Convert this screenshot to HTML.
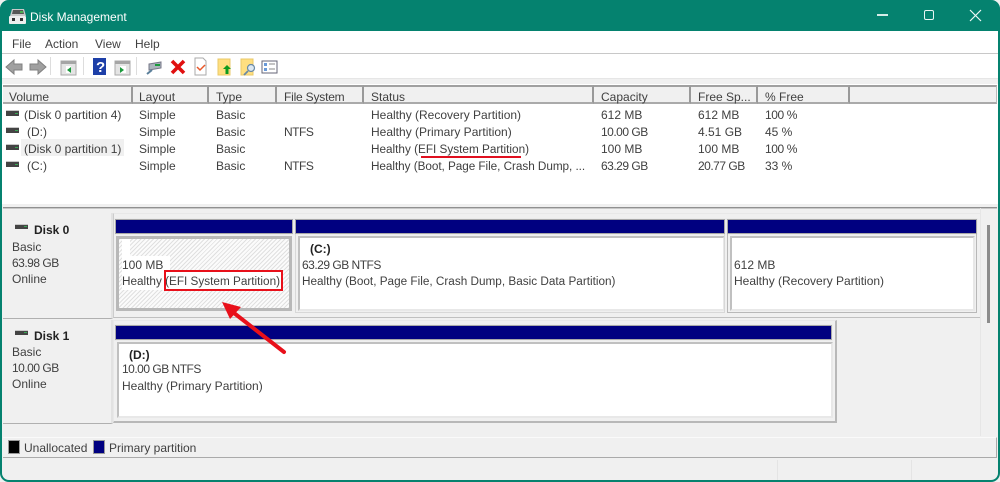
<!DOCTYPE html>
<html><head><meta charset="utf-8"><style>
html,body{margin:0;padding:0;width:1000px;height:482px;overflow:hidden;background:#fff}
#w{position:relative;width:1000px;height:482px;overflow:hidden;background:#f0f0f0;font-family:"Liberation Sans",sans-serif;font-size:12px;color:#404040}
#w div{position:absolute;box-sizing:border-box}
.t{position:absolute;white-space:nowrap;line-height:14px;height:14px}
.b{font-weight:bold;color:#222}
.n{letter-spacing:-.5px}
.s{font-size:11.75px;margin-top:1px}
.h{background:#f0f0f0;top:85px;height:19px;border-top:2px solid #a0a0a0;border-right:2px solid #999;border-bottom:2px solid #aaa}
.nv{background:#000080;border:1px solid #a8a8a8;outline:1px solid #ececec}
.pt{background:#fff;border-top:2px solid #c0c0c0;border-left:2px solid #c0c0c0;border-right:2px solid #e8e8e8;border-bottom:2px solid #e8e8e8}
</style></head><body><div id="w">
<div style="left:0;top:0;width:1000px;height:482px;border:2px solid #05826f;border-top:0;border-radius:9px;pointer-events:none;z-index:9"></div>
<div style="left:0;top:0;width:1000px;height:31px;background:#05826f;border-radius:9px 9px 0 0"></div>
<svg style="position:absolute;left:9px;top:8px" width="18" height="17" viewBox="0 0 18 17"><path d="M3 1h12l2 7H1z" fill="#c9c9c9"/><path d="M4 2h10l1 4H3z" fill="#555"/><rect x="0" y="8" width="17" height="8" rx="1" fill="#eee"/><rect x="3" y="10" width="3" height="3" fill="#333"/><rect x="11" y="10" width="3" height="3" fill="#333"/><rect x="11" y="3" width="3" height="2" fill="#4caf50"/></svg>
<span class="t" style="left:30px;top:10px;color:#fff;font-size:12px">Disk Management</span>
<div style="left:877px;top:14px;width:11px;height:2px;background:#d5ece8"></div>
<div style="left:924px;top:10px;width:10px;height:10px;border:1.5px solid #e8f5f3;border-radius:2px"></div>
<svg style="position:absolute;left:969px;top:9px" width="13" height="13"><path d="M1 1L12 12M12 1L1 12" stroke="#eef8f6" stroke-width="1.2"/></svg>

<div style="left:2px;top:31px;width:996px;height:22px;background:#fff"></div>
<span class="t" style="left:12px;top:37px">File</span>
<span class="t" style="left:45px;top:37px">Action</span>
<span class="t" style="left:95px;top:37px">View</span>
<span class="t" style="left:135px;top:37px">Help</span>
<div style="left:2px;top:53px;width:996px;height:1px;background:#c8c8c8"></div>
<div style="left:2px;top:54px;width:996px;height:24px;background:#fff"></div>
<div style="left:2px;top:78px;width:996px;height:1px;background:#e6e6e6"></div>
<svg style="position:absolute;left:0;top:54px" width="300" height="24" viewBox="0 0 300 24">
<path d="M6 13l8-7v4h8v6h-8v4z" fill="#a0a0a0" stroke="#808080"/>
<path d="M46 13l-8-7v4h-8v6h8v4z" fill="#a0a0a0" stroke="#808080"/>
<rect x="50" y="3" width="1" height="18" fill="#ddd"/>
<rect x="61" y="7" width="15" height="14" fill="#e4e4e4" stroke="#aaa"/><rect x="61" y="7" width="15" height="3" fill="#a5a5a5"/><rect x="66" y="12" width="5" height="7" fill="#fff"/><path d="M71 13l-4 3 4 3z" fill="#1a9a3c"/>
<rect x="83" y="3" width="1" height="18" fill="#ddd"/>
<rect x="93" y="4" width="13" height="17" fill="#1d3fa8"/><text x="96" y="18" font-family="Liberation Sans" font-weight="bold" font-size="15" fill="#fff">?</text>
<rect x="115" y="7" width="15" height="14" fill="#e4e4e4" stroke="#aaa"/><rect x="115" y="7" width="15" height="3" fill="#a5a5a5"/><rect x="120" y="12" width="6" height="7" fill="#fff"/><path d="M120 13l4 3-4 3z" fill="#1a9a3c"/>
<rect x="136" y="3" width="1" height="18" fill="#ddd"/>
<path d="M149 10l12-2v6l-12 2z" fill="#aab4bc" stroke="#778"/><rect x="155" y="10" width="5" height="2" fill="#1a9a3c"/><path d="M147 20l5-4" stroke="#5a7f9a" stroke-width="2"/>
<path d="M172 7l12 12M184 7l-12 12" stroke="#e01010" stroke-width="3.6"/>
<path d="M195 4h8l3 3v14h-11z" fill="#fff" stroke="#aaa"/><path d="M197 13l3 3 5-5" stroke="#e8582a" stroke-width="1.5" fill="none"/>
<rect x="218" y="5" width="12" height="16" fill="#ffdf80" stroke="#e8c868"/><path d="M227 11l-4 4h2.500v5h3v-5h2.500z" fill="#0e9a1e"/>
<rect x="241" y="5" width="12" height="16" fill="#ffdf80" stroke="#e8c868"/><circle cx="251" cy="14" r="3.500" fill="#dce8f2" stroke="#6a8aa5" stroke-width="1.200"/><path d="M248 17l-4 4" stroke="#6a8aa5" stroke-width="1.800"/>
<rect x="262" y="7" width="15" height="12" fill="#fff" stroke="#667"/><rect x="264" y="9" width="3" height="3" fill="#6a9ad8"/><rect x="264" y="14" width="3" height="3" fill="#6a9ad8"/><path d="M269 10h6M269 15h6" stroke="#888"/>
</svg>

<div style="left:2px;top:84px;width:996px;height:120px;background:#fff"></div>
<div class="h" style="left:3px;width:130px"></div>
<div class="h" style="left:133px;width:76px"></div>
<div class="h" style="left:209px;width:68px"></div>
<div class="h" style="left:277px;width:87px"></div>
<div class="h" style="left:364px;width:230px"></div>
<div class="h" style="left:594px;width:97px"></div>
<div class="h" style="left:691px;width:67px"></div>
<div class="h" style="left:758px;width:92px"></div>
<div class="h" style="left:850px;width:147px;border-right:1px solid #bbb"></div>
<span class="t" style="left:9px;top:90px">Volume</span><span class="t" style="left:139px;top:90px">Layout</span><span class="t" style="left:216px;top:90px">Type</span><span class="t" style="left:284px;top:90px;letter-spacing:-.2px">File System</span><span class="t" style="left:371px;top:90px">Status</span><span class="t" style="left:601px;top:90px">Capacity</span><span class="t" style="left:698px;top:90px">Free Sp...</span><span class="t" style="left:765px;top:90px">% Free</span>

<div style="left:21px;top:139px;width:103px;height:17px;background:#f0f0f0"></div>
<svg style="position:absolute;left:6px;top:110px" width="14" height="62"><g fill="#444"><rect y="1" width="13" height="5"/><rect y="18" width="13" height="5"/><rect y="35" width="13" height="5"/><rect y="52" width="13" height="5"/></g><g fill="#c8c8c8"><rect y="0" width="13" height="1"/><rect y="17" width="13" height="1"/><rect y="34" width="13" height="1"/><rect y="51" width="13" height="1"/></g><g fill="#3aa655"><rect x="9" y="3" width="3" height="1"/><rect x="9" y="20" width="3" height="1"/><rect x="9" y="37" width="3" height="1"/><rect x="9" y="54" width="3" height="1"/></g></svg>
<span class="t" style="left:24px;top:108px">(Disk 0 partition 4)</span><span class="t" style="left:139px;top:108px">Simple</span><span class="t" style="left:216px;top:108px">Basic</span><span class="t" style="left:371px;top:108px">Healthy (Recovery Partition)</span><span class="t" style="left:601px;top:108px">612 MB</span><span class="t" style="left:698px;top:108px">612 MB</span><span class="t" style="left:765px;top:108px;letter-spacing:-.4px">100 %</span>
<span class="t" style="left:27px;top:125px">(D:)</span><span class="t" style="left:139px;top:125px">Simple</span><span class="t" style="left:216px;top:125px">Basic</span><span class="t n" style="left:284px;top:125px">NTFS</span><span class="t" style="left:371px;top:125px">Healthy (Primary Partition)</span><span class="t n" style="left:601px;top:125px">10.00 GB</span><span class="t" style="left:698px;top:125px">4.51 GB</span><span class="t" style="left:765px;top:125px">45 %</span>
<span class="t" style="left:24px;top:142px">(Disk 0 partition 1)</span><span class="t" style="left:139px;top:142px">Simple</span><span class="t" style="left:216px;top:142px">Basic</span><span class="t s" style="left:371px;top:142px">Healthy (EFI System Partition)</span><span class="t" style="left:601px;top:142px">100 MB</span><span class="t" style="left:698px;top:142px">100 MB</span><span class="t" style="left:765px;top:142px;letter-spacing:-.4px">100 %</span>
<span class="t" style="left:27px;top:159px">(C:)</span><span class="t" style="left:139px;top:159px">Simple</span><span class="t" style="left:216px;top:159px">Basic</span><span class="t n" style="left:284px;top:159px">NTFS</span><span class="t s" style="left:371px;top:159px;letter-spacing:-.05px">Healthy (Boot, Page File, Crash Dump, ...</span><span class="t n" style="left:601px;top:159px">63.29 GB</span><span class="t n" style="left:698px;top:159px">20.77 GB</span><span class="t" style="left:765px;top:159px">33 %</span>
<div style="left:421px;top:156px;width:100px;height:2px;background:#e01020"></div>

<div style="left:3px;top:207px;width:994px;height:1px;background:#909090"></div>
<div style="left:3px;top:208px;width:994px;height:1px;background:#c8c8c8"></div>

<div style="left:3px;top:213px;width:110px;height:106px;background:#f0f0f0;border-right:2px solid #e2e2e2;border-bottom:1px solid #b0b0b0"></div>
<div style="left:3px;top:320px;width:110px;height:104px;background:#f0f0f0;border-right:2px solid #e2e2e2;border-bottom:1px solid #b0b0b0"></div>
<svg style="position:absolute;left:15px;top:224px" width="14" height="120"><rect y="1" width="13" height="4" fill="#444"/><rect width="13" height="1" fill="#c8c8c8"/><rect x="9" y="2" width="3" height="1" fill="#3aa655"/><rect y="107" width="13" height="4" fill="#444"/><rect y="106" width="13" height="1" fill="#c8c8c8"/><rect x="9" y="108" width="3" height="1" fill="#3aa655"/></svg>
<span class="t b" style="left:34px;top:223px">Disk 0</span>
<span class="t" style="left:12px;top:240px">Basic</span><span class="t n" style="left:12px;top:256px">63.98 GB</span><span class="t" style="left:12px;top:272px">Online</span>
<span class="t b" style="left:34px;top:329px">Disk 1</span>
<span class="t" style="left:12px;top:345px">Basic</span><span class="t n" style="left:12px;top:361px">10.00 GB</span><span class="t" style="left:12px;top:377px">Online</span>

<div style="left:113px;top:213px;width:867px;height:105px;border-top:1px solid #e8e8e8;border-left:1px solid #ccc;border-bottom:1px solid #c0c0c0"></div>
<div class="nv" style="left:115px;top:219px;width:178px;height:15px"></div>
<div class="nv" style="left:295px;top:219px;width:430px;height:15px"></div>
<div class="nv" style="left:727px;top:219px;width:250px;height:15px"></div>

<div style="left:116px;top:236px;width:176px;height:75px;border:3px solid #b8b8b8;background:repeating-linear-gradient(135deg,#e0e0e0 0,#e0e0e0 1px,#fbfbfb 1px,#fbfbfb 3px)"></div>
<div style="left:122px;top:239px;width:8px;height:17px;background:#fff"></div>
<div style="left:122px;top:256px;width:48px;height:16px;background:#fff"></div>
<div style="left:122px;top:272px;width:160px;height:18px;background:#fff"></div>
<div class="pt" style="left:298px;top:236px;width:427px;height:75px"></div>
<div class="pt" style="left:730px;top:236px;width:245px;height:75px"></div>
<div style="left:727px;top:234px;width:250px;height:79px;border:1px solid #b8b8b8;border-top:0"></div>
<div style="left:295px;top:234px;width:430px;height:79px;border:1px solid #d8d8d8;border-top:0"></div>

<span class="t" style="left:122px;top:258px">100 MB</span><span class="t s" style="left:122px;top:274px">Healthy (EFI System Partition)</span>
<span class="t b" style="left:310px;top:242px">(C:)</span><span class="t n" style="left:302px;top:258px">63.29 GB NTFS</span><span class="t s" style="left:302px;top:274px">Healthy (Boot, Page File, Crash Dump, Basic Data Partition)</span>
<span class="t" style="left:734px;top:258px">612 MB</span><span class="t" style="left:734px;top:274px">Healthy (Recovery Partition)</span>

<div style="left:113px;top:320px;width:724px;height:103px;border:1px solid #e8e8e8;border-right:2px solid #b8b8b8;border-bottom:2px solid #b8b8b8"></div>
<div class="nv" style="left:115px;top:325px;width:717px;height:15px"></div>
<div class="pt" style="left:117px;top:342px;width:716px;height:76px"></div>
<span class="t b" style="left:129px;top:348px">(D:)</span><span class="t n" style="left:122px;top:362px">10.00 GB NTFS</span><span class="t" style="left:122px;top:379px">Healthy (Primary Partition)</span>

<div style="left:980px;top:208px;width:1px;height:228px;background:#e6e6e6"></div>
<div style="left:987px;top:225px;width:3px;height:98px;background:#8c8c8c"></div>

<div style="left:3px;top:437px;width:994px;height:21px;background:#f0f0f0;border-top:1px solid #fafafa;border-right:1px solid #aaa;border-bottom:1px solid #aaa"></div>
<div style="left:8px;top:440px;width:12px;height:14px;background:#000;border:1px solid #999"></div>
<span class="t" style="left:24px;top:441px">Unallocated</span>
<div style="left:93px;top:440px;width:12px;height:14px;background:#000080;border:1px solid #999"></div>
<span class="t" style="left:109px;top:441px">Primary partition</span>
<div style="left:777px;top:460px;width:1px;height:20px;background:#e4e4e4"></div>
<div style="left:911px;top:460px;width:1px;height:20px;background:#e4e4e4"></div>

<div style="left:164px;top:270px;width:119px;height:21px;border:2px solid #e8101a"></div>
<svg style="position:absolute;left:210px;top:295px" width="85" height="65"><path d="M74 57L24 18" stroke="#e8101a" stroke-width="4" stroke-linecap="round"/><path d="M12 7L31 12L20 24z" fill="#e8101a"/></svg>
</div></body></html>
